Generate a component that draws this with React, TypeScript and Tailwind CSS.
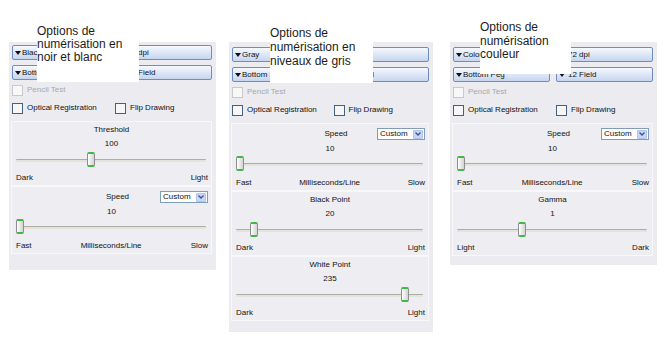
import React from 'react';

type Section = {
  title: string;
  value: string;
  frac: number;
  left: string;
  right: string;
  middle?: string;
  speed?: boolean;
};

const Tri = () => (
  <svg width="6" height="4" viewBox="0 0 6 4" className="shrink-0">
    <path d="M0 0H6L3 4Z" fill="#111" />
  </svg>
);

const DropButton = ({ label, spaced }: { label: string; spaced?: boolean }) => (
  <div
    className={`flex h-[15px] items-center overflow-hidden whitespace-nowrap rounded-[2px] border border-[#6f8dc4] bg-linear-to-b from-[#f6f9fe] to-[#c6d5ef] pl-[2px] text-[8px] text-[#111] ${
      spaced ? 'gap-[3px]' : 'gap-[1px]'
    }`}
  >
    <Tri />
    <span>{label}</span>
  </div>
);

const Check = ({ label, disabled }: { label: string; disabled?: boolean }) => (
  <div className="flex h-[14px] items-center gap-[4px] whitespace-nowrap text-[8px]">
    <span
      className={`h-[11px] w-[11px] shrink-0 border ${
        disabled ? 'border-[#c9c9c9] bg-[#f8f8f8]' : 'border-[#45607f] bg-[#f6f6f6]'
      }`}
    />
    <span className={disabled ? 'text-[#a8a8a8]' : 'text-[#111]'}>{label}</span>
  </div>
);

const Combo = () => (
  <div className="flex h-[12px] w-[48px] items-center justify-between border border-[#7f9db9] bg-white pl-[2px] text-[8px] text-[#111]">
    <span>Custom</span>
    <span className="mr-[1px] flex h-[9px] w-[10px] items-center justify-center rounded-[1px] border border-[#b3c4ec] bg-[#c6d6f8]">
      <svg width="6" height="4" viewBox="0 0 6 4">
        <path d="M0.5 0.5L3 3L5.5 0.5" fill="none" stroke="#3d5585" strokeWidth="1.3" />
      </svg>
    </span>
  </div>
);

const Slider = ({ frac }: { frac: number }) => (
  <div className="relative ml-[4px] mr-[5px] h-[16px]">
    <div className="absolute left-0 right-0 top-[7px] h-[3px] rounded-[1px] border-t border-[#aeada4] bg-[#e4e3dc]" />
    <div
      className="absolute top-0 h-[15px] w-[8px] rounded-[2px] border-x border-y-2 border-x-[#8e8e8e] border-y-[#3db944] bg-linear-to-r from-[#fefefe] to-[#d3d3d3]"
      style={{ left: `calc(${frac * 100}% - ${frac * 8}px)` }}
    />
  </div>
);

const SliderSection = ({ s }: { s: Section }) => (
  <div
    className={`flex flex-col border border-[#f8f8fa] bg-[#eeedf1] text-[8px] text-[#111] ${
      s.speed ? 'h-[68px] pt-[3px]' : 'h-[65px] pt-[2px]'
    }`}
  >
    {s.speed ? (
      <div className="grid h-[14px] grid-cols-[1fr_auto_1fr] items-center">
        <div />
        <div className="ml-[12px] leading-[12px]">{s.title}</div>
        <div className="flex justify-end pr-[3px]">
          <Combo />
        </div>
      </div>
    ) : (
      <div className="h-[12px] text-center leading-[12px]">{s.title}</div>
    )}
    <div className={`h-[12px] text-center leading-[12px] ${s.speed ? 'mt-[2px]' : 'mt-[2px]'}`}>{s.value}</div>
    <div className={s.speed ? 'mt-[1px]' : 'mt-[2px]'}>
      <Slider frac={s.frac} />
    </div>
    <div
      className={`flex h-[12px] items-center justify-between pl-[4px] pr-[3px] leading-[12px] ${
        s.speed ? 'mt-[5px]' : 'mt-[4px]'
      }`}
    >
      <span>{s.left}</span>
      {s.middle && <span>{s.middle}</span>}
      <span>{s.right}</span>
    </div>
  </div>
);

const speed: Section = {
  title: 'Speed',
  value: '10',
  frac: 0,
  left: 'Fast',
  middle: 'Milliseconds/Line',
  right: 'Slow',
  speed: true,
};

const Panel = ({
  mode,
  sections,
  className,
}: {
  mode: string;
  sections: Section[];
  className: string;
}) => (
  <div className={`flex shrink-0 flex-col bg-[#ecebf0] pl-[2px] pr-[4px] ${className}`}>
    <div className="grid grid-cols-2 gap-x-[6px] gap-y-[5px] pl-[1px]">
      <DropButton label={mode} />
      <DropButton label="72 dpi" spaced />
      <DropButton label="Bottom Peg" />
      <DropButton label="12 Field" spaced />
    </div>
    <div className="mt-[3px] pl-[1px]">
      <Check label="Pencil Test" disabled />
    </div>
    <div className="mt-[4px] grid grid-cols-2 gap-x-[6px] pl-[1px]">
      <Check label="Optical Registration" />
      <Check label="Flip Drawing" />
    </div>
    <div className="mt-[6px] flex flex-col">
      {sections.map((s) => (
        <SliderSection key={s.title} s={s} />
      ))}
    </div>
  </div>
);

const Caption = ({ lines, className }: { lines: string[]; className: string }) => (
  <div
    className={`absolute bg-white text-[12px] text-[#1c1c1c] font-['Liberation_Sans',Arial,sans-serif] ${className}`}
  >
    {lines.map((l) => (
      <div key={l} className="whitespace-nowrap">
        {l}
      </div>
    ))}
  </div>
);

export default function App() {
  return (
    <div className="relative h-[342px] w-[666px] overflow-hidden bg-white font-['Liberation_Sans',Arial,sans-serif]">
      <div className="flex items-start pl-[9px] pt-[42px]">
        <Panel
          mode="Black & White"
          className="h-[228px] w-[207px] pt-[3px]"
          sections={[
            { title: 'Threshold', value: '100', frac: 100 / 255, left: 'Dark', right: 'Light' },
            speed,
          ]}
        />
        <Panel
          mode="Gray"
          className="ml-[13px] h-[290px] w-[204px] pt-[5px]"
          sections={[
            speed,
            { title: 'Black Point', value: '20', frac: 20 / 255, left: 'Dark', right: 'Light' },
            { title: 'White Point', value: '235', frac: 235 / 255, left: 'Dark', right: 'Light' },
          ]}
        />
        <Panel
          mode="Color"
          className="ml-[17px] h-[223px] w-[207px] pt-[5px]"
          sections={[
            speed,
            { title: 'Gamma', value: '1', frac: 0.335, left: 'Light', right: 'Dark' },
          ]}
        />
      </div>

      <Caption
        className="left-[37px] top-[25px] h-[57px] w-[102px] leading-[13px]"
        lines={['Options de', 'numérisation en', 'noir et blanc']}
      />
      <Caption
        className="left-[270px] top-[26px] h-[57px] w-[103px] leading-[14px]"
        lines={['Options de', 'numérisation en', 'niveaux de gris']}
      />
      <Caption
        className="left-[480px] top-[21px] h-[53px] w-[91px] leading-[13.5px]"
        lines={['Options de', 'numérisation', 'couleur']}
      />
    </div>
  );
}
